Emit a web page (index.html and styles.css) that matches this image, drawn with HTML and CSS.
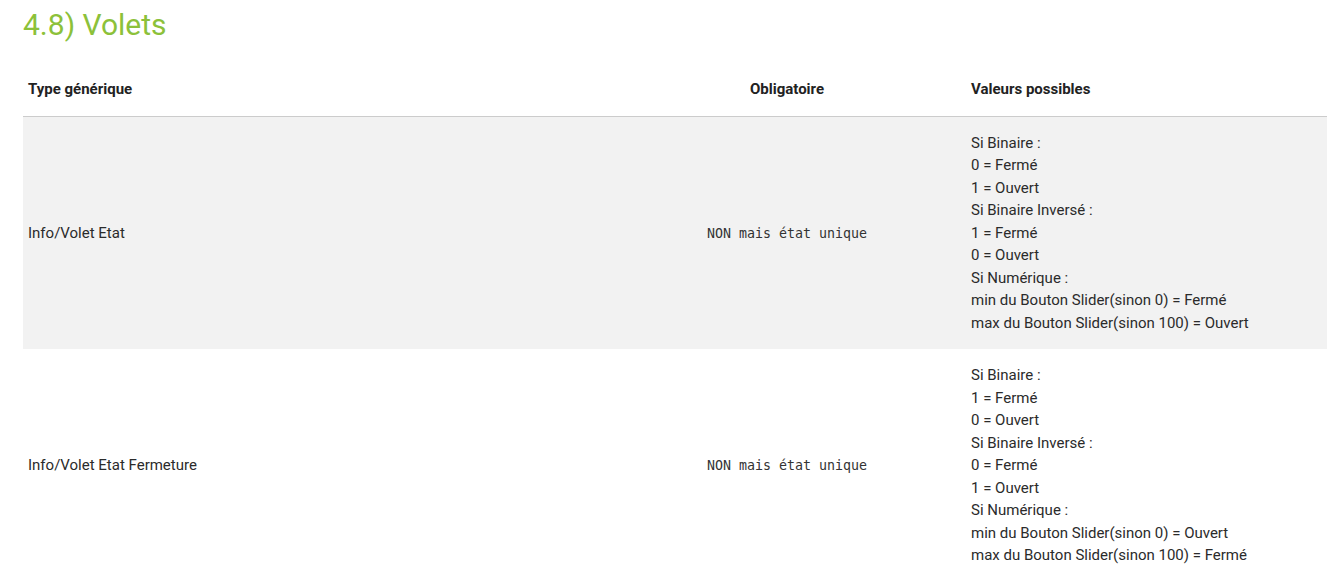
FILE: index.html
```html
<!DOCTYPE html>
<html lang="fr">
<head>
    <meta charset="UTF-8">
    <meta name="viewport" content="width=device-width, initial-scale=1.0">
    <title>Volets - Types génériques</title>
    <link rel="stylesheet" href="styles.css">
</head>
<body>
    <div class="doc-section">
        <h2 class="section-title">4.8) Volets</h2>

        <table class="generic-table">
            <thead>
                <tr>
                    <th class="col-type">Type générique</th>
                    <th class="col-required">Obligatoire</th>
                    <th class="col-values">Valeurs possibles</th>
                </tr>
            </thead>
            <tbody>
                <tr>
                    <td>Info/Volet Etat</td>
                    <td class="col-required"><code>NON mais état unique</code></td>
                    <td>
                        Si Binaire :<br>
                        0 = Fermé<br>
                        1 = Ouvert<br>
                        Si Binaire Inversé :<br>
                        1 = Fermé<br>
                        0 = Ouvert<br>
                        Si Numérique :<br>
                        min du Bouton Slider(sinon 0) = Fermé<br>
                        max du Bouton Slider(sinon 100) = Ouvert
                    </td>
                </tr>
                <tr>
                    <td>Info/Volet Etat Fermeture</td>
                    <td class="col-required"><code>NON mais état unique</code></td>
                    <td>
                        Si Binaire :<br>
                        1 = Fermé<br>
                        0 = Ouvert<br>
                        Si Binaire Inversé :<br>
                        0 = Fermé<br>
                        1 = Ouvert<br>
                        Si Numérique :<br>
                        min du Bouton Slider(sinon 0) = Ouvert<br>
                        max du Bouton Slider(sinon 100) = Fermé
                    </td>
                </tr>
            </tbody>
        </table>
    </div>
</body>
</html>
```

FILE: styles.css
```css
* {
    margin: 0;
    padding: 0;
    box-sizing: border-box;
}

body {
    font-family: Roboto, 'Noto Sans', sans-serif;
    font-size: 15px;
    line-height: 1.5;
    color: #2b2b2b;
    background: white;
}

.doc-section {
    padding-left: 23px;
}

.section-title {
    font-size: 30px;
    font-weight: normal;
    line-height: 33px;
    color: #8cc13a;
    margin-top: 8px;
    margin-bottom: 22px;
}

.generic-table {
    width: 100%;
    border-collapse: collapse;
    border-spacing: 0;
}

.generic-table th,
.generic-table td {
    padding: 15px 5px;
    text-align: left;
    vertical-align: middle;
}

.generic-table th {
    font-weight: bold;
    color: #222;
    border-bottom: 1px solid #ccc;
}

.generic-table .col-type {
    width: 585px;
}

.generic-table .col-required {
    width: 358px;
    text-align: center;
}

.generic-table tbody tr:nth-child(odd) {
    background: #f2f2f2;
}

.generic-table code {
    font-family: 'DejaVu Sans Mono', 'Liberation Mono', monospace;
    font-size: 13.3px;
    color: #333;
}
```
